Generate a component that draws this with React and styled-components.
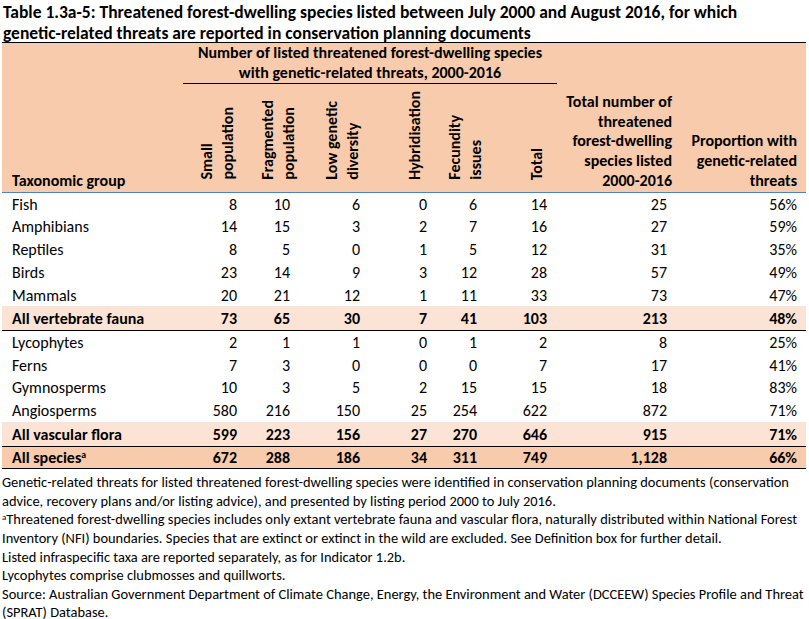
import React from "react";
import styled, { createGlobalStyle } from "styled-components";

const GlobalStyle = createGlobalStyle`
  body {
    margin: 0;
    background: #fff;
    color: #000;
    font-family: Carlito, "Liberation Sans", sans-serif;
  }
`;

const Page = styled.div`
  width: 809px;
  height: 619px;
  overflow: hidden;
`;

const Title = styled.div`
  padding: 2px 0 0 3px;
  height: 40px;
  font-size: 17.5px;
  font-weight: bold;
  line-height: 21px;
`;

const Nowrap = styled.span`
  white-space: nowrap;
`;

const Table = styled.table`
  margin-left: 2px;
  width: 804px;
  table-layout: fixed;
  border-collapse: collapse;
  border-top: 1px solid #000;
  font-size: 16px;
`;

const HeadCell = styled.th`
  background: #f8cbad;
  font-weight: bold;
  font-size: 16px;
  line-height: 19.7px;
  vertical-align: bottom;
  text-align: ${(p) => (p.$right ? "right" : "left")};
  padding: 0 ${(p) => p.$pr || 0}px 1.5px ${(p) => p.$pl || 0}px;
  border-bottom: 1px solid #4f81bd;
  white-space: nowrap;
`;

const GroupCell = styled.th`
  background: #f8cbad;
  font-weight: bold;
  font-size: 16px;
  line-height: 20px;
  text-align: center;
  vertical-align: top;
  padding: 0;
  height: 39px;
  border-bottom: 1px solid #000;
  white-space: nowrap;
`;

const RotRow = styled.tr`
  height: 109px;
`;

const RotCell = styled.th`
  background: #f8cbad;
  vertical-align: bottom;
  padding: 0 0 12px 0;
  border-bottom: 1px solid #4f81bd;
`;

const Rotated = styled.div`
  writing-mode: vertical-rl;
  transform: rotate(180deg);
  white-space: nowrap;
  text-align: left;
  font-size: 16px;
  font-weight: bold;
  line-height: 20.5px;
  margin-left: ${(p) => p.$ml}px;
`;

const rowBg = { sub: "#fbe4d5", total: "#f8cbad" };
const rowH = { sub: 24.5, total: 22 };

const Row = styled.tr`
  height: ${(p) => rowH[p.$kind] || 22.8}px;
  background: ${(p) => rowBg[p.$kind] || "transparent"};
  font-weight: ${(p) => (p.$kind ? "bold" : "normal")};
  border-bottom: ${(p) => (p.$kind ? "1px solid #000" : "none")};
`;

const NameCell = styled.td`
  padding: 0 0 0 10px;
  white-space: nowrap;
  line-height: 19px;
`;

const NumCell = styled.td`
  padding: 0 ${(p) => p.$pr}px 0 0;
  text-align: right;
  white-space: nowrap;
  line-height: 19px;
`;

const Sup = styled.sup`
  font-size: 0.62em;
  line-height: 0;
  vertical-align: 0.5em;
`;

const Notes = styled.div`
  padding: 4px 0 0 2px;
  font-size: 14.45px;
  line-height: 18.6px;
`;

const Note = styled.div``;

const cols = [
  { w: 181 },
  { w: 59, pr: 5, hpl: 14, head: ["Small", "population"] },
  { w: 53, pr: 5, hpl: 16, head: ["Fragmented", "population"] },
  { w: 70, pr: 5, hpl: 27, head: ["Low genetic", "diversity"] },
  { w: 67, pr: 5, hpl: 40, head: ["Hybridisation"] },
  { w: 50, pr: 5, hpl: 13, head: ["Fecundity", "issues"] },
  { w: 75, pr: 10, hpl: 45, head: ["Total"] },
  { w: 120, pr: 10 },
  { w: 129, pr: 9 },
];

const rows = [
  { name: "Fish", v: ["8", "10", "6", "0", "6", "14", "25", "56%"] },
  { name: "Amphibians", v: ["14", "15", "3", "2", "7", "16", "27", "59%"] },
  { name: "Reptiles", v: ["8", "5", "0", "1", "5", "12", "31", "35%"] },
  { name: "Birds", v: ["23", "14", "9", "3", "12", "28", "57", "49%"] },
  { name: "Mammals", v: ["20", "21", "12", "1", "11", "33", "73", "47%"] },
  { name: "All vertebrate fauna", v: ["73", "65", "30", "7", "41", "103", "213", "48%"], kind: "sub" },
  { name: "Lycophytes", v: ["2", "1", "1", "0", "1", "2", "8", "25%"] },
  { name: "Ferns", v: ["7", "3", "0", "0", "0", "7", "17", "41%"] },
  { name: "Gymnosperms", v: ["10", "3", "5", "2", "15", "15", "18", "83%"] },
  { name: "Angiosperms", v: ["580", "216", "150", "25", "254", "622", "872", "71%"] },
  { name: "All vascular flora", v: ["599", "223", "156", "27", "270", "646", "915", "71%"], kind: "sub" },
  { name: "All species", sup: "a", v: ["672", "288", "186", "34", "311", "749", "1,128", "66%"], kind: "total" },
];

function NoteList() {
  return (
    <Notes>
      <Note>
        Genetic-related threats for listed threatened forest-dwelling species were identified in conservation planning documents (conservation advice, recovery plans and/or listing advice), and presented by listing period 2000 to July 2016.
      </Note>
      <Note>
        <Sup>a</Sup>Threatened forest-dwelling species includes only extant vertebrate fauna and vascular flora, naturally distributed within National Forest Inventory (NFI) boundaries. Species that are extinct or extinct in the wild are excluded. See Definition box for further detail.
      </Note>
      <Note>Listed infraspecific taxa are reported separately, as for Indicator 1.2b.</Note>
      <Note>Lycophytes comprise clubmosses and quillworts.</Note>
      <Note>
        Source: Australian Government Department of Climate Change, Energy, the Environment and Water (DCCEEW) Species Profile and Threat (SPRAT) Database.
      </Note>
    </Notes>
  );
}

export default function App() {
  return (
    <Page>
      <GlobalStyle />
      <Title>
        Table 1.3a-5: Threatened forest-dwelling species listed between July 2000 and August 2016, for which{" "}
        <Nowrap>genetic-related</Nowrap> threats are reported in conservation planning documents
      </Title>
      <Table>
        <colgroup>
          {cols.map((c, i) => (
            <col key={i} style={{ width: c.w }} />
          ))}
        </colgroup>
        <thead>
          <tr>
            <HeadCell rowSpan={2} $pl={10}>Taxonomic group</HeadCell>
            <GroupCell colSpan={6}>
              Number of listed threatened forest-dwelling species
              <br />
              with genetic-related threats, 2000-2016
            </GroupCell>
            <HeadCell rowSpan={2} $right $pr={5}>
              Total number of
              <br />
              threatened
              <br />
              forest-dwelling
              <br />
              species listed
              <br />
              2000-2016
            </HeadCell>
            <HeadCell rowSpan={2} $right $pr={9}>
              Proportion with
              <br />
              genetic-related
              <br />
              threats
            </HeadCell>
          </tr>
          <RotRow>
            {cols.slice(1, 7).map((c, i) => (
              <RotCell key={i}>
                <Rotated $ml={c.hpl}>
                  {c.head.map((line, j) => (
                    <React.Fragment key={j}>
                      {j > 0 && <br />}
                      {line}
                    </React.Fragment>
                  ))}
                </Rotated>
              </RotCell>
            ))}
          </RotRow>
        </thead>
        <tbody>
          {rows.map((r) => (
            <Row key={r.name} $kind={r.kind}>
              <NameCell>
                {r.name}
                {r.sup && <Sup>{r.sup}</Sup>}
              </NameCell>
              {r.v.map((val, i) => (
                <NumCell key={i} $pr={cols[i + 1].pr}>
                  {val}
                </NumCell>
              ))}
            </Row>
          ))}
        </tbody>
      </Table>
      <NoteList />
    </Page>
  );
}
